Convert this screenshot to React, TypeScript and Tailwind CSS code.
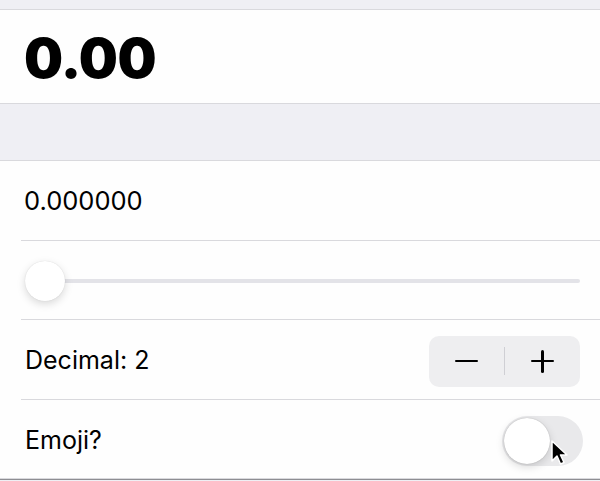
import { useState } from "react";

function Divider() {
  return <div className="ml-[21px] h-px bg-[#d9d9dd]" />;
}

export default function App() {
  const [emoji, setEmoji] = useState(false);
  const [decimal, setDecimal] = useState(2);
  const [value] = useState(0);

  return (
    <div className="h-[481px] w-[600px] overflow-hidden bg-[#efeff4] text-black [font-family:Inter,'Liberation_Sans',sans-serif]">
      <div className="h-[9px]" />
      <div className="border-y border-[#d9d9dd] bg-[#fefefe]">
        <div className="flex h-[93px] items-center pl-[24px] pt-[3px] text-[55px] font-black tracking-[-0.6px]">
          {value.toFixed(decimal)}
        </div>
      </div>
      <div className="h-[56px]" />
      <div className="border-y border-[#d9d9dd] bg-[#fefefe]">
        <div className="flex h-[79px] items-center pl-[24px] pt-[2px] text-[25.5px]">{value.toFixed(6)}</div>
        <Divider />
        <div className="flex h-[78px] items-center pl-[25px] pr-[20px] pt-[2px]">
          <div className="relative flex h-[40px] flex-1 items-center">
            <div className="h-[4px] w-full rounded-full bg-[#e3e3e8]" />
            <div className="absolute left-0 top-0 h-[40px] w-[40px] rounded-full bg-white shadow-[0_3px_8px_rgba(0,0,0,0.15),0_0_1px_rgba(0,0,0,0.16)]" />
          </div>
        </div>
        <Divider />
        <div className="flex h-[79px] items-center justify-between pl-[25px] pr-[20px] pt-[3px]">
          <span className="text-[25px]">Decimal: {decimal}</span>
          <div className="flex h-[51px] w-[151px] items-center rounded-[10px] bg-[#eeeef0]">
            <button
              type="button"
              onClick={() => setDecimal((d) => Math.max(0, d - 1))}
              className="flex h-full flex-1 items-center justify-center"
            >
              <span className="block h-[2.5px] w-[23px] rounded bg-black" />
            </button>
            <div className="h-[28px] w-px bg-[#cfcfd4]" />
            <button
              type="button"
              onClick={() => setDecimal((d) => d + 1)}
              className="relative flex h-full flex-1 items-center justify-center"
            >
              <span className="block h-[2.5px] w-[23px] rounded bg-black" />
              <span className="absolute block h-[23px] w-[2.5px] rounded bg-black" />
            </button>
          </div>
        </div>
        <Divider />
        <div className="flex h-[78px] items-center justify-between pl-[25px] pr-[17px] pt-[3px]">
          <span className="text-[25px]">Emoji?</span>
          <button
            type="button"
            onClick={() => setEmoji((e) => !e)}
            className={`relative h-[50px] w-[81px] rounded-full ${emoji ? "bg-[#34c759]" : "bg-[#e9e9eb]"}`}
          >
            <span
              className={`absolute top-[2px] h-[46px] w-[46px] rounded-full bg-white shadow-[0_3px_8px_rgba(0,0,0,0.15),0_0_1px_rgba(0,0,0,0.3)] ${emoji ? "left-[33px]" : "left-[2px]"}`}
            />
            <svg className="absolute left-[48px] top-[24px]" width="20" height="28" viewBox="0 0 20 28">
              <path d="M2 1 L2 21 L7 16 L10.5 24 L14 22.5 L10.5 15 L17 15 Z" fill="black" stroke="white" strokeWidth="1.5" strokeLinejoin="round" />
            </svg>
          </button>
        </div>
      </div>
      <div className="h-px bg-[#8e8e93]" />
    </div>
  );
}
